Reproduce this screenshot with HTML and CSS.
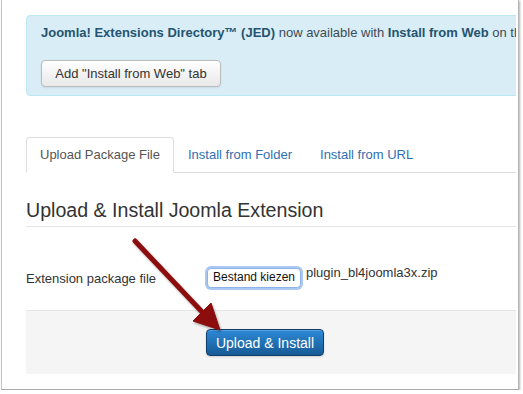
FILE: index.html
```html
<!DOCTYPE html>
<html lang="en">
<head>
  <meta charset="UTF-8">
  <title>Extensions: Install</title>
  <link rel="stylesheet" href="styles.css">
</head>
<body>
  <div class="frame">
    <div class="content">
      <div class="alert">
        <p class="alert-text"><strong>Joomla! Extensions Directory™ (JED)</strong> now available with <strong>Install from Web</strong> on this page.</p>
        <button class="btn">Add "Install from Web" tab</button>
      </div>

      <ul class="tabs">
        <li class="tab active">Upload Package File</li>
        <li class="tab">Install from Folder</li>
        <li class="tab">Install from URL</li>
      </ul>

      <h2 class="legend">Upload &amp; Install Joomla Extension</h2>

      <div class="control-group">
        <label class="control-label">Extension package file</label>
        <div class="controls">
          <span class="file-btn">Bestand kiezen</span>
          <span class="file-name">plugin_bl4joomla3x.zip</span>
        </div>
      </div>

      <div class="form-actions">
        <button class="btn btn-primary">Upload &amp; Install</button>
      </div>
    </div>

    <svg class="arrow" width="120" height="110" viewBox="0 0 120 110">
      <defs>
        <filter id="shadow" x="-20%" y="-20%" width="140%" height="140%">
          <feDropShadow dx="1" dy="1.5" stdDeviation="1.2" flood-color="#000" flood-opacity="0.35"/>
        </filter>
      </defs>
      <g filter="url(#shadow)" fill="#8c0a0a" stroke="#8c0a0a">
        <line x1="14" y1="12" x2="84" y2="86" stroke-width="5" stroke-linecap="round"/>
        <polygon points="99,101 72,92 90,74" stroke-width="1" stroke-linejoin="round"/>
      </g>
    </svg>
  </div>
</body>
</html>
```

FILE: styles.css
```css
body {
  margin: 0;
  font-family: 'Liberation Sans', Arial, sans-serif;
  font-size: 13px;
  color: #333;
  background: #fff;
}
.frame {
  position: relative;
  margin-left: 1px;
  width: 516px;
  height: 389px;
  border-left: 1px solid #c4c4c4;
  border-right: 1px solid #b4b4b4;
  border-bottom: 1px solid #a8a8a8;
  box-shadow: 1px 1px 2px rgba(0, 0, 0, 0.3);
  background: #fff;
}
.content {
  margin-left: 24px;
  width: 490px;
  overflow: hidden;
  padding-top: 15px;
}
.alert {
  width: 600px;
  box-sizing: border-box;
  height: 81px;
  padding: 8px 14px;
  background: #d9edf7;
  border: 1px solid #bce8f1;
  border-radius: 4px;
  color: #3d4b53;
}
.alert-text {
  margin: 0;
  line-height: 18px;
  white-space: nowrap;
}
.alert-text strong {
  color: #24546f;
}
.btn {
  font-family: 'Liberation Sans', Arial, sans-serif;
  font-size: 13px;
  height: 27px;
  padding: 0 11px;
  white-space: nowrap;
  color: #333;
  border: 1px solid #bbb;
  border-radius: 4px;
  background: linear-gradient(#fff, #e8e8e8);
  box-shadow: inset 0 1px 0 rgba(255, 255, 255, 0.3), 0 1px 2px rgba(0, 0, 0, 0.08);
}
.alert .btn {
  margin-top: 18px;
  width: 180px;
}
.tabs {
  display: flex;
  margin: 41px 0 0;
  padding: 0;
  list-style: none;
  border-bottom: 1px solid #ddd;
}
.tab {
  height: 34px;
  line-height: 34px;
  padding: 0 13px;
  margin-bottom: -1px;
  white-space: nowrap;
  color: #2f6fb1;
  border: 1px solid transparent;
  border-radius: 4px 4px 0 0;
}
.tab.active {
  color: #555;
  background: #fff;
  border-color: #ddd #ddd transparent;
}
.legend {
  margin: 0;
  padding: 26px 0 5px;
  font-size: 19.6px;
  font-weight: normal;
  line-height: 22px;
  color: #333;
  border-bottom: 1px solid #e5e5e5;
}
.control-group {
  display: flex;
  margin-top: 41px;
  height: 20px;
}
.control-label {
  width: 181px;
  padding-top: 2px;
  line-height: 18px;
}
.controls {
  display: flex;
  align-items: flex-start;
}
.file-btn {
  display: block;
  box-sizing: border-box;
  width: 94px;
  height: 20px;
  line-height: 17px;
  font-size: 12px;
  text-align: center;
  color: #111;
  background: #fff;
  border: 1px solid #8fb3e8;
  border-radius: 4px;
  box-shadow: 0 0 0 2px #a9c8f2;
}
.file-name {
  margin-left: 5px;
  margin-top: -3px;
  line-height: 16px;
  white-space: nowrap;
}
.form-actions {
  margin-top: 22px;
  padding: 18px 0 0 180px;
  box-sizing: border-box;
  height: 64px;
  background: #f5f5f5;
  border-top: 1px solid #e5e5e5;
}
.btn-primary {
  width: 118px;
  padding: 0;
  font-size: 14px;
  color: #fff;
  border-color: #0f3f6e;
  background: linear-gradient(#2d89d6, #175a95);
  box-shadow: inset 0 1px 0 rgba(255, 255, 255, 0.2), 0 1px 2px rgba(0, 0, 0, 0.15);
}
.arrow {
  position: absolute;
  left: 119px;
  top: 229px;
}
```
